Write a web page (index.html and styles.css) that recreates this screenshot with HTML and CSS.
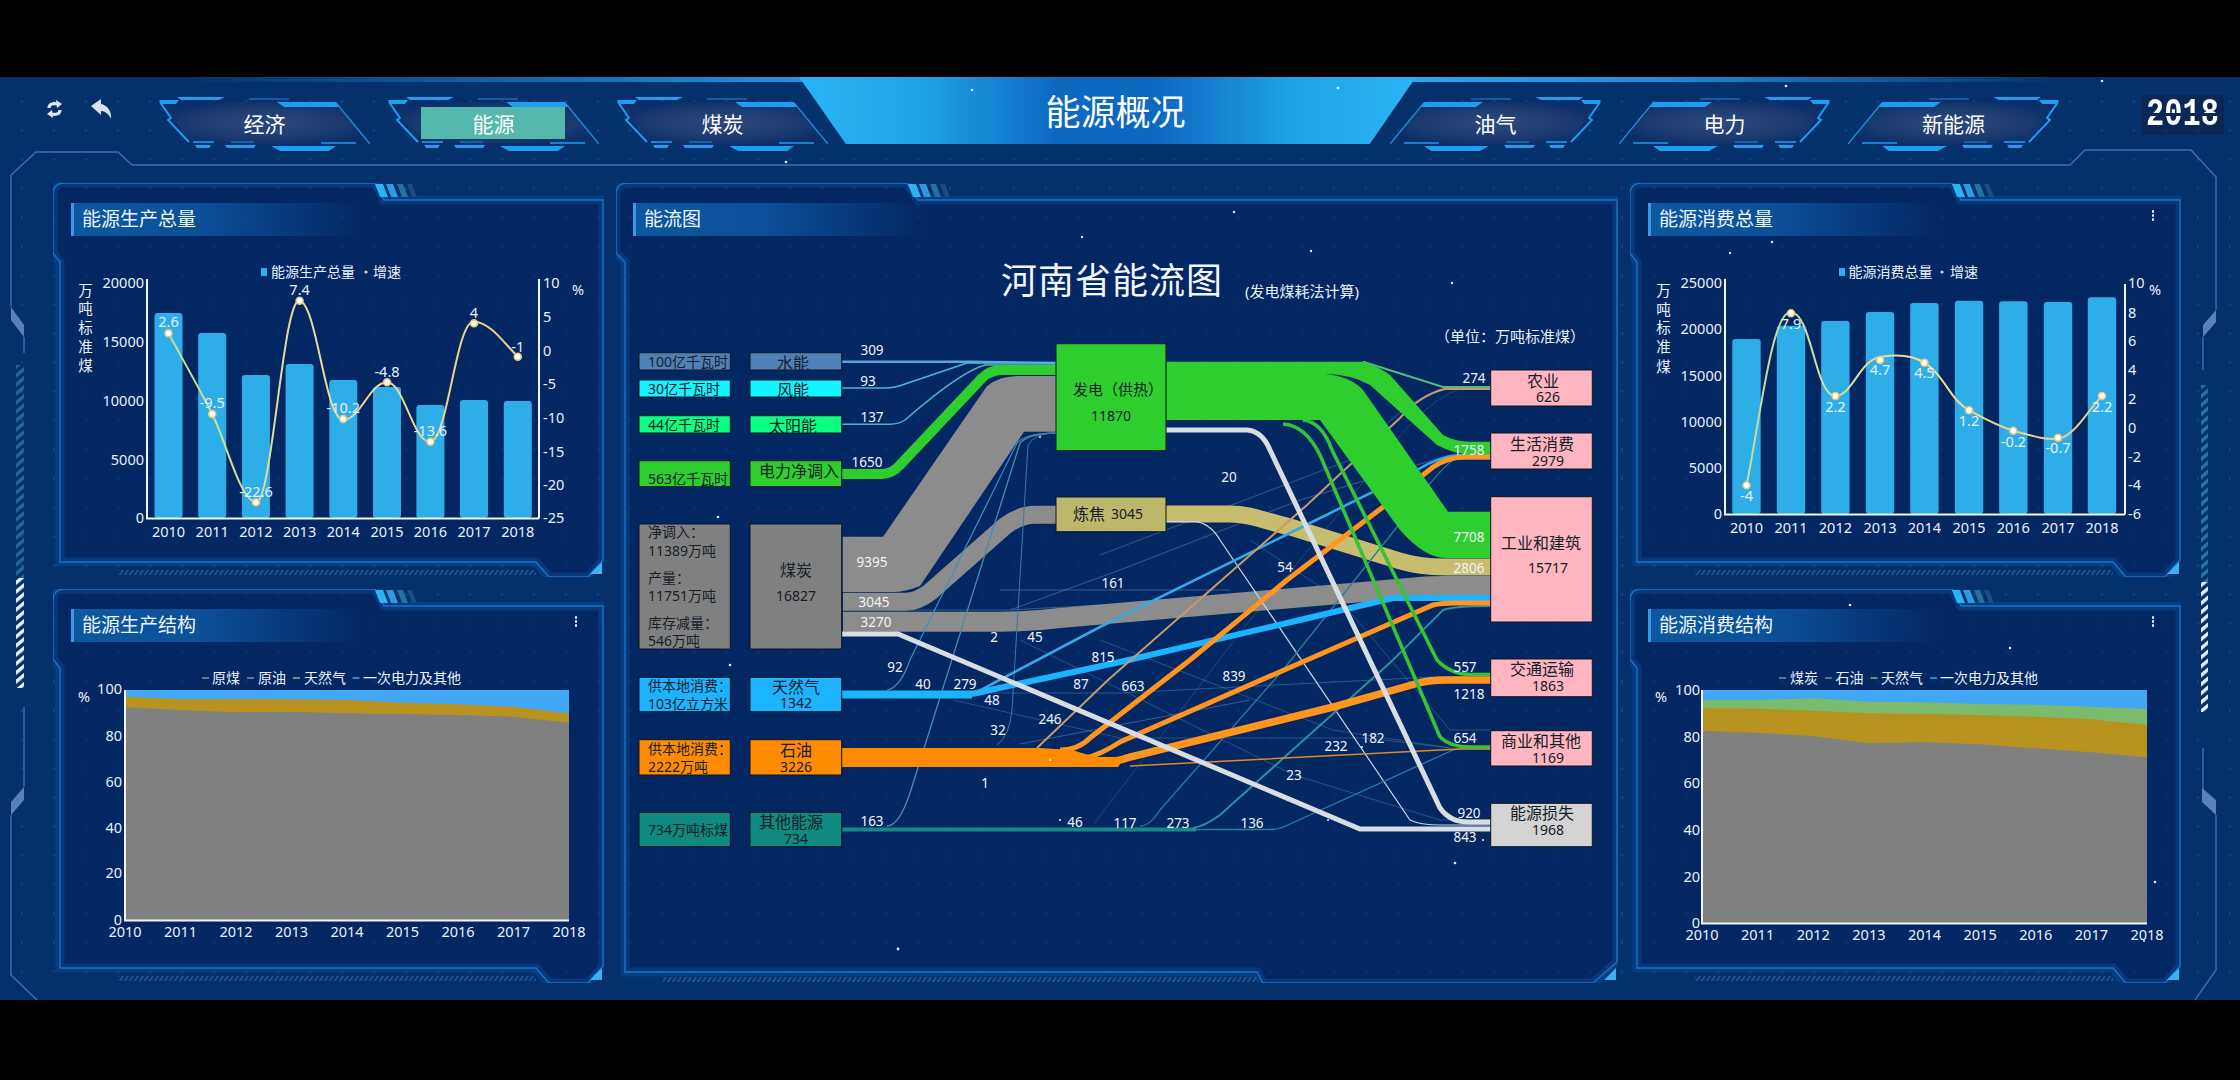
FILE: index.html
```html
<!DOCTYPE html>
<html lang="zh-CN">
<head>
<meta charset="utf-8">
<title>能源概况</title>
<link rel="stylesheet" href="styles.css">
</head>
<body>
<svg class="defs" aria-hidden="true">
  <defs>
    <radialGradient id="tabfill" cx="50%" cy="50%" r="55%">
      <stop offset="0" stop-color="#2d4a7b"/><stop offset="0.7" stop-color="#1a3a70"/><stop offset="1" stop-color="#0b2f69"/>
    </radialGradient>
    <linearGradient id="linegrad" x1="0" y1="0" x2="1" y2="0">
      <stop offset="0" stop-color="#bfdca0"/><stop offset="0.5" stop-color="#f0dc94"/><stop offset="1" stop-color="#e8c98a"/>
    </linearGradient>
    <pattern id="hatch" width="5" height="6" patternUnits="userSpaceOnUse" patternTransform="skewX(-35)">
      <rect width="2.2" height="6" fill="#3f86c9"/>
    </pattern>
    <pattern id="vteal" width="8" height="9" patternUnits="userSpaceOnUse" patternTransform="skewY(-40)">
      <rect width="8" height="4.5" fill="#2f8fb4"/>
    </pattern>
    <pattern id="vwhite" width="8" height="9" patternUnits="userSpaceOnUse" patternTransform="skewY(-40)">
      <rect width="8" height="4.5" fill="#e6eff9"/>
    </pattern>
    <symbol id="tab" viewBox="0 0 211 55">
      <polygon points="4,6 177,6 210,48 31,48" fill="url(#tabfill)"/>
      <g fill="#1f9df0">
        <polygon points="0,4 20,4 17,8 2,8"/>
        <polygon points="18,1 66,1 60,4 22,4"/>
        <polygon points="118,6 177,6 181,11 125,11"/>
        <polygon points="36,49 52,49 50,52 38,52"/>
        <polygon points="66,49 97,49 95,52 68,52"/>
        <polygon points="112,50 177,50 170,55 121,55"/>
      </g>
      <polyline points="1,6 12,22 9,24 30,46" fill="none" stroke="#1f9df0" stroke-width="2"/>
      <line x1="178" y1="8" x2="211" y2="48" stroke="#1f8fe0" stroke-width="1.2"/>
      <g stroke-width="1.6" fill="none">
        <line x1="90" y1="3" x2="130" y2="3" stroke="#1a6cb8"/>
        <line x1="34" y1="46" x2="55" y2="46" stroke="#1f9df0"/>
        <line x1="72" y1="46" x2="95" y2="46" stroke="#1a6cb8"/>
        <line x1="162" y1="47" x2="197" y2="47" stroke="#1f9df0"/>
      </g>
    </symbol>
    <symbol id="stripes" viewBox="0 0 60 14">
      <polygon points="0,0 8,0 13,13 5,13" fill="#2ab4f2"/>
      <polygon points="11,0 18,0 23,13 16,13" fill="#2a9bdc"/>
      <polygon points="22,0 28,0 33,13 27,13" fill="#23719f" />
      <polygon points="32,0 37,0 42,13 37,13" fill="#17507f"/>
    </symbol>
    <symbol id="frame-side" viewBox="0 0 551 394">
      <path d="M7,379 V79 L0,70 V12 Q0,0 12,0 H322 L331,17 H550 V377 L535,394 H496 L483,379 Z" class="frame-fill"/>
      <path d="M7,379 V79 L0,70 V12 Q0,0 12,0 H322 L331,17 H550 V377 L535,394 H496 L483,379 Z" class="frame-glow"/>
      <path d="M7,379 V79 L0,70 V12 Q0,0 12,0 H322 L331,17 H550 V377 L535,394 H496 L483,379 Z" class="frame-line"/>
      <rect x="65" y="387" width="418" height="5" fill="url(#hatch)" opacity=".45"/>
      <polygon points="549,379 549,391 537,391" fill="#3db0f0"/>
      <use href="#stripes" x="322" y="1" width="60" height="14"/>
    </symbol>
    <symbol id="frame-center" viewBox="0 0 1002 800">
      <path d="M9,789 V79 L0,70 V12 Q0,0 12,0 H291 L302,17 H1001 V779 L977,800 H647 L641,789 Z" class="frame-fill"/>
      <path d="M9,789 V79 L0,70 V12 Q0,0 12,0 H291 L302,17 H1001 V779 L977,800 H647 L641,789 Z" class="frame-glow"/>
      <path d="M9,789 V79 L0,70 V12 Q0,0 12,0 H291 L302,17 H1001 V779 L977,800 H647 L641,789 Z" class="frame-line"/>
      <rect x="47" y="794" width="594" height="5" fill="url(#hatch)" opacity=".45"/>
      <polygon points="1000,785 1000,797 988,797" fill="#3db0f0"/>
      <use href="#stripes" x="292" y="1" width="60" height="14"/>
    </symbol>
  </defs>
</svg>

<main class="stage">
  <svg class="stage-frame" viewBox="0 77 2240 923" aria-hidden="true">
    <g class="deco-line">
      <path d="M132,165 H2070 L2085,150 H2191 L2216,177 V310"/>
      <path d="M132,165 L118,152 H36 L11,175 V307"/>
      <path d="M24,337 V353"/>
      <path d="M2203,337 V370"/>
      <path d="M24,707 V787"/>
      <path d="M11,815 V975 L37,1000"/>
      <path d="M2203,748 V790"/>
      <path d="M2216,815 V970 L2195,1000"/>
    </g>
    <g fill="#5a82b8">
      <polygon points="11,307 24,325 24,337 11,320"/>
      <polygon points="2216,310 2216,322 2203,337 2203,325"/>
      <polygon points="24,787 24,800 11,815 11,802"/>
      <polygon points="2202,788 2216,800 2216,815 2202,802"/>
    </g>
    <rect x="16" y="365" width="8" height="213" fill="url(#vteal)" opacity=".6"/>
    <rect x="16" y="578" width="8" height="110" fill="url(#vwhite)"/>
    <rect x="2201" y="385" width="7" height="197" fill="url(#vteal)" opacity=".75"/>
    <rect x="2201" y="582" width="7" height="130" fill="url(#vwhite)"/>
  </svg>

  <header class="top">
    <div class="tools">
      <svg class="ic-refresh" viewBox="0 0 15 18" aria-hidden="true">
        <path d="M2,8 C2,4 6,3 11,4" fill="none" stroke="#dde7f2" stroke-width="3.2"/>
        <polygon points="9,0 15,4 10,8" fill="#dde7f2"/>
        <path d="M13,10 C13,14 9,15 4,14" fill="none" stroke="#dde7f2" stroke-width="3.2"/>
        <polygon points="6,18 0,14 5,10" fill="#dde7f2"/>
      </svg>
      <svg class="ic-back" viewBox="0 0 21 20" aria-hidden="true">
        <path d="M0,7 L10,0 V5 C16,6 21,12 20,20 C18,15 14,12 10,12 V16 Z" fill="#d5e2ee"/>
      </svg>
    </div>
    <nav class="tabs">
      <a class="tab"><svg class="tab-bg"><use href="#tab"/></svg><span>经济</span></a>
      <a class="tab active"><svg class="tab-bg"><use href="#tab"/></svg><i class="tab-on"></i><span>能源</span></a>
      <a class="tab"><svg class="tab-bg"><use href="#tab"/></svg><span>煤炭</span></a>
    </nav>
    <h1 class="main-title">能源概况</h1>
    <nav class="tabs tabs-right">
      <a class="tab"><svg class="tab-bg"><use href="#tab"/></svg><span>油气</span></a>
      <a class="tab"><svg class="tab-bg"><use href="#tab"/></svg><span>电力</span></a>
      <a class="tab"><svg class="tab-bg"><use href="#tab"/></svg><span>新能源</span></a>
    </nav>
    <div class="year"><span class="year-num">2018</span></div>
  </header>

  <div class="board">
    <section class="panel panel-a">
      <svg class="frame" viewBox="0 0 551 394"><use href="#frame-side"/></svg>
      <h2 class="bar">能源生产总量</h2>
      <svg class="chart" viewBox="53 236 551 341">
        <g class="legend">
          <rect x="261" y="268" width="6" height="8" fill="#2eaee8"/>
          <text x="271" y="277">能源生产总量</text>
          <circle cx="366" cy="272" r="1.6" fill="#cfe3a8"/>
          <text x="373" y="277">增速</text>
        </g>
        <g class="bars">
          <rect x="154.5" y="313" width="28" height="205" rx="3"/>
          <rect x="198.2" y="333" width="28" height="185" rx="3"/>
          <rect x="241.9" y="375" width="28" height="143" rx="3"/>
          <rect x="285.6" y="364" width="28" height="154" rx="3"/>
          <rect x="329.3" y="380" width="28" height="138" rx="3"/>
          <rect x="373" y="387" width="28" height="131" rx="3"/>
          <rect x="416.4" y="405" width="28" height="113" rx="3"/>
          <rect x="460" y="400" width="28" height="118" rx="3"/>
          <rect x="503.8" y="401" width="28" height="117" rx="3"/>
        </g>
        <path class="axis-line" d="M147,279 V518.5 H539 M539,518.5 V279"/>
        <g class="tx end">
          <text x="144" y="288">20000</text><text x="144" y="347">15000</text><text x="144" y="406">10000</text><text x="144" y="465">5000</text><text x="144" y="523">0</text>
        </g>
        <g class="tx">
          <text x="543" y="288">10</text><text x="543" y="322">5</text><text x="543" y="356">0</text><text x="543" y="389">-5</text><text x="543" y="423">-10</text><text x="543" y="457">-15</text><text x="543" y="490">-20</text><text x="543" y="523">-25</text>
          <text x="572" y="295">%</text>
        </g>
        <g class="tx mid">
          <text x="85.5" y="296">万</text><text x="85.5" y="314">吨</text><text x="85.5" y="333">标</text><text x="85.5" y="352">准</text><text x="85.5" y="371">煤</text>
          <text x="168.5" y="537">2010</text><text x="212.2" y="537">2011</text><text x="255.9" y="537">2012</text><text x="299.6" y="537">2013</text><text x="343.3" y="537">2014</text><text x="387" y="537">2015</text><text x="430.4" y="537">2016</text><text x="474" y="537">2017</text><text x="517.8" y="537">2018</text>
        </g>
        <path class="curve" d="M168.5,333.3 C183,360 198,386 212.2,414 C227,444 240,500 255.9,502.3 C272,505 283,297 299.6,300.7 C317,304 325,420 343.3,420 C360,420 370,382 387,382.3 C404,382 413,443 430.4,441.7 C448,440 456,320 474,321.5 C491,323 503,342 517.8,356.7"/>
        <g class="dots">
          <circle cx="168.5" cy="333.3" r="3.5"/><circle cx="212.2" cy="414" r="3.5"/><circle cx="255.9" cy="502.3" r="3.5"/><circle cx="299.6" cy="300.7" r="3.5"/><circle cx="343.3" cy="419" r="3.5"/><circle cx="387" cy="382.3" r="3.5"/><circle cx="430.4" cy="441.7" r="3.5"/><circle cx="474" cy="323.3" r="3.5"/><circle cx="517.8" cy="356.7" r="3.5"/>
        </g>
        <g class="tx mid">
          <text x="168.5" y="327">2.6</text><text x="212.2" y="408">-9.5</text><text x="256" y="497">-22.6</text><text x="299.6" y="295">7.4</text><text x="343.3" y="413">-10.2</text><text x="387" y="377">-4.8</text><text x="430.4" y="436">-13.6</text><text x="474" y="318">4</text><text x="517.8" y="352">-1</text>
        </g>
      </svg>
    </section>

    <section class="panel panel-center">
      <svg class="frame" viewBox="0 0 1002 800"><use href="#frame-center"/></svg>
      <h2 class="bar bar-center">能流图</h2>
      <svg class="chart" viewBox="616 236 1002 747">
        <text class="sk-title" x="1001" y="294">河南省能流图</text>
        <text class="sk-sub" x="1245" y="297">(发电煤耗法计算)</text>
        <text class="sk-sub" x="1435" y="342">（单位：万吨标准煤）</text>

        <!-- faint lines -->
        <g class="flow faint">
          <path d="M1010,610 L1120,570 L1300,500 L1450,455 H1491" stroke="#6d8fb4"/>
          <path d="M1100,555 L1350,460 Q1400,405 1440,389 H1491" stroke="#5f86ad"/>
          <path d="M1093,825 L1250,620 L1350,500 Q1420,400 1460,389 H1491" stroke="#2d6f95"/>
          <path d="M953,700 L1120,738 L1367,738 L1450,748 H1491" stroke="#4a7ea8"/>
          <path d="M1100,640 L1333,730 L1450,748" stroke="#4a7ea8"/>
          <path d="M1020,640 L1294,775 L1440,820 H1491" stroke="#4a7ea8"/>
          <path d="M1250,540 L1340,600 L1450,730 H1491" stroke="#4a7ea8"/>
          <path d="M973,693 H1120 L1433,677 H1491" stroke="#3f8fc4"/>
          <path d="M1100,605 L1010,610 H890" stroke="#6d8fb4"/>
          <path d="M1000,590 L1230,590" stroke="#6d8fb4"/>
          <path d="M1020,744 L1250,700" stroke="#6d8fb4"/>
        </g>
        <g class="flow">
          <path d="M842,361.7 H970 L1056,363" stroke="#5da5d4" stroke-width="2.4"/>
          <path d="M842,388 H885 Q895,388 905,384 L967,363 H1056" stroke="#52b5d4" stroke-width="1.4"/>
          <path d="M842,424.3 H890 Q899,424 905,420 Q960,372 985,365 H1056" stroke="#4ab5c4" stroke-width="1.5"/>
          <path d="M842,474 H882 Q892,474 900,465 L982,378 Q990,370 1002,370 H1056" stroke="#2dce2d" stroke-width="10"/>
        </g>
        <!-- coal -->
        <path class="fill-gray" d="M842.7,536.7 H883 L987,386 Q1000,376 1017,376 H1056 V431.7 H1024 L920,586 Q905,592 893,592 H842.7 Z"/>
        <g class="flow">
          <path d="M843,601.7 H905 Q918,601.7 930,592 L1005,526 Q1020,514.7 1035,514.7 H1056" stroke="#8c8c8c" stroke-width="18"/>
          <path d="M843,621.7 H1000 Q1030,621.7 1060,618 L1420,587 Q1430,586 1445,586 H1491" stroke="#8c8c8c" stroke-width="20"/>
          <!-- thin to power -->
          <path d="M887,690 Q900,688 910,660 L1017,443 Q1026,433 1056,433" stroke="#3d8fc0" stroke-width="1.2"/>
          <path d="M887,826 Q899,826 910,793 L1020,443 Q1030,433 1056,433" stroke="#4a8ca8" stroke-width="1.3"/>
          <path d="M997,745 Q1010,735 1012,710 L1028,445 Q1035,433 1056,433" stroke="#3b78a4" stroke-width="1"/>
          <!-- coke -->
          <path d="M1166,514 H1230 C1250,514 1265,521 1290,527 L1400,561 Q1420,567 1445,567 H1491" stroke="#c8bd6e" stroke-width="17"/>
          <path d="M1166,521.7 H1195 Q1210,523 1220,540 L1410,820 Q1420,825 1440,825 H1491" stroke="#c6d6e6" stroke-width="1.2"/>
          <!-- other -->
          <path d="M842,829.5 H1196" stroke="#138a85" stroke-width="4"/>
          <path d="M1190,829.5 H1273 Q1280,829 1290,824 L1453,750 Q1460,748 1491,749" stroke="#2b7e98" stroke-width="1.3"/>
          <path d="M1140,826 Q1150,826 1160,810 L1283,670 L1397,527 Q1440,467 1455,459 H1491" stroke="#2a7c9c" stroke-width="1.3"/>
          <path d="M1193,828 Q1205,826 1220,815 L1393,660 L1443,610 Q1455,606 1491,606" stroke="#2f8f9c" stroke-width="2"/>
          <!-- gas -->
          <path d="M842,694.5 H965 Q975,694 990,690 L1120,662 L1300,620 L1393,598 H1491" stroke="#1db4ff" stroke-width="6"/>
          <path d="M960,695 Q975,694 990,685 L1100,627 L1300,528 L1417,470 Q1440,456 1460,455 H1491" stroke="#34a8e8" stroke-width="2.6"/>
          <path d="M842,694.5 H972" stroke="#1db4ff" stroke-width="8"/>
          <!-- oil -->
          <path d="M1037,748 L1108,680 L1207,593 L1307,505 L1400,418 Q1420,395 1445,389 H1491" stroke="#c49a6c" stroke-width="2"/>
          <path d="M1130,766 L1460,749 H1491" stroke="#e08a20" stroke-width="1.5"/>
          <path d="M1060,750 Q1078,750 1090,738 L1190,660 L1287,580 L1383,507 L1433,467 Q1448,457 1465,457 H1491" stroke="#ff951f" stroke-width="5"/>
          <path d="M1085,758 Q1100,755 1120,742 L1307,660 L1433,605 Q1442,603 1455,603 H1491" stroke="#ff951f" stroke-width="5"/>
          <path d="M1100,763 Q1112,763 1130,757 L1333,707 L1415,684 Q1428,680 1445,680 H1491" stroke="#ff951f" stroke-width="7.5"/>
        </g>
        <path class="fill-orange" d="M842,748 H1040 L1072,750 L1095,757 L1125,757 L1118,767 H842 Z"/>
        <g class="flow">
          <!-- loss -->
          <path d="M842,634 H898 L1360,829 H1491" stroke="#d8dde4" stroke-width="5"/>
          <path d="M1166,430 H1247 Q1262,431 1270,450 L1440,808 Q1450,822 1468,822 H1491" stroke="#d8dde4" stroke-width="5"/>
          <!-- green thin -->
          <path d="M1283,424 Q1305,425 1320,455 L1440,737 Q1450,747 1470,747 H1491" stroke="#35c435" stroke-width="3.6"/>
          <path d="M1303,420 Q1322,422 1332,450 L1437,660 Q1450,674 1470,674.5 H1491" stroke="#35c435" stroke-width="3.6"/>
          <path d="M1363,361.7 L1443,387 H1491" stroke="#5ab87a" stroke-width="2"/>
        </g>
        <!-- green wide -->
        <path class="fill-green" d="M1166,361.7 H1363 Q1378,366 1390,375 L1443,435 Q1455,441.7 1470,441.7 H1491 V454.3 H1465 Q1450,452 1437,445 L1370,385 Q1350,374 1325,374 H1166 Z"/>
        <path class="fill-green" d="M1166,374 H1325 Q1350,376 1363,390 L1448,511.7 H1491 V558 H1445 Q1425,558 1400,530 L1320,420 H1166 Z"/>

        <!-- source boxes -->
        <g class="node">
          <rect x="639" y="352.7" width="91.3" height="17.3" fill="#4d81b8"/>
          <rect x="750" y="352.7" width="91.7" height="17.3" fill="#4d81b8"/>
          <rect x="639" y="380" width="91.3" height="17" fill="#13f4ff"/>
          <rect x="750" y="380" width="91.7" height="17" fill="#13f4ff"/>
          <rect x="639" y="415.7" width="91.3" height="17.3" fill="#0cff80"/>
          <rect x="750" y="415.7" width="91.7" height="17.3" fill="#0cff80"/>
          <rect x="639" y="460.7" width="91.3" height="26" fill="#2dce2d"/>
          <rect x="750" y="460.7" width="91.7" height="26" fill="#2dce2d"/>
          <rect x="639" y="524" width="91.3" height="125" fill="#808080"/>
          <rect x="750" y="524" width="91.7" height="125" fill="#808080"/>
          <rect x="639" y="677.3" width="91.3" height="34.4" fill="#1cb4ff"/>
          <rect x="750" y="677.3" width="91.7" height="34.4" fill="#1cb4ff"/>
          <rect x="639" y="739.7" width="91.3" height="35.3" fill="#ff8c00"/>
          <rect x="750" y="739.7" width="91.7" height="35.3" fill="#ff8c00"/>
          <rect x="639" y="812.3" width="91.3" height="34.4" fill="#0f8a80"/>
          <rect x="750" y="812.3" width="91.7" height="34.4" fill="#0f8a80"/>
          <rect x="1056" y="343.7" width="110" height="107" fill="#2dce2d"/>
          <rect x="1056" y="497" width="110" height="34.7" fill="#bdb76b"/>
          <rect x="1490.7" y="370" width="101.6" height="36" fill="#ffb6c1"/>
          <rect x="1490.7" y="433" width="101.6" height="36" fill="#ffb6c1"/>
          <rect x="1490.7" y="496.7" width="101.6" height="125.3" fill="#ffb6c1"/>
          <rect x="1490.7" y="659" width="101.6" height="37.7" fill="#ffb6c1"/>
          <rect x="1490.7" y="730.7" width="101.6" height="35.3" fill="#ffb6c1"/>
          <rect x="1490.7" y="803.3" width="101.6" height="43.4" fill="#d3d3d3"/>
        </g>
        <g class="nt">
          <text x="648" y="367">100亿千瓦时</text>
          <text x="648" y="394">30亿千瓦时</text>
          <text x="648" y="430">44亿千瓦时</text>
          <text x="648" y="484">563亿千瓦时</text>
          <text x="648" y="537">净调入：</text>
          <text x="648" y="556">11389万吨</text>
          <text x="648" y="583">产量：</text>
          <text x="648" y="601">11751万吨</text>
          <text x="648" y="628">库存减量：</text>
          <text x="648" y="646">546万吨</text>
          <text x="648" y="691">供本地消费：</text>
          <text x="648" y="709">103亿立方米</text>
          <text x="648" y="754">供本地消费：</text>
          <text x="648" y="772">2222万吨</text>
          <text x="648" y="835">734万吨标煤</text>
        </g>
        <g class="nt mid">
          <text x="796" y="601">16827</text>
          <text x="796" y="708">1342</text>
          <text x="796" y="772">3226</text>
          <text x="796" y="844">734</text>
          <text x="1111" y="421">11870</text>
          <text x="1548" y="402">626</text>
          <text x="1548" y="466">2979</text>
          <text x="1548" y="573">15717</text>
          <text x="1548" y="691">1863</text>
          <text x="1548" y="763">1169</text>
          <text x="1548" y="835">1968</text>
        </g>
        <g class="nb mid">
          <text x="793" y="369">水能</text>
          <text x="793" y="396">风能</text>
          <text x="793" y="432">太阳能</text>
          <text x="799" y="477">电力净调入</text>
          <text x="796" y="576">煤炭</text>
          <text x="796" y="693">天然气</text>
          <text x="796" y="756">石油</text>
          <text x="791" y="828">其他能源</text>
          <text class="nb-power" x="1118" y="395">发电（供热）</text>
          <text x="1543" y="387">农业</text>
          <text x="1542" y="450">生活消费</text>
          <text x="1541" y="549">工业和建筑</text>
          <text x="1542" y="675">交通运输</text>
          <text x="1541" y="747">商业和其他</text>
          <text x="1542" y="819">能源损失</text>
        </g>
        <text class="nb" x="1073" y="520">炼焦</text>
        <text class="nt" x="1111" y="519">3045</text>

        <g class="sv">
          <text x="872" y="355">309</text><text x="868" y="386">93</text><text x="872" y="422">137</text><text x="867" y="467">1650</text><text x="872" y="567">9395</text><text x="874" y="607">3045</text><text x="876" y="627">3270</text>
          <text x="994" y="642">2</text><text x="1035" y="642">45</text><text x="895" y="672">92</text><text x="923" y="689">40</text><text x="965" y="689">279</text><text x="992" y="705">48</text><text x="998" y="735">32</text><text x="1050" y="724">246</text><text x="1081" y="689">87</text><text x="1103" y="662">815</text><text x="985" y="788">1</text><text x="872" y="826">163</text><text x="1075" y="827">46</text>
          <text x="1113" y="588">161</text><text x="1229" y="482">20</text><text x="1285" y="572">54</text><text x="1474" y="383">274</text><text x="1469" y="455">1758</text><text x="1469" y="542">7708</text><text x="1469" y="573">2806</text><text x="1465" y="672">557</text>
          <text x="1133" y="691">663</text><text x="1234" y="681">839</text><text x="1469" y="699">1218</text><text x="1465" y="743">654</text><text x="1373" y="743">182</text><text x="1336" y="751">232</text><text x="1294" y="780">23</text><text x="1125" y="828">117</text><text x="1178" y="828">273</text><text x="1252" y="828">136</text><text x="1469" y="818">920</text><text x="1465" y="842">843</text>
        </g>
      </svg>
    </section>

    <section class="panel panel-c">
      <svg class="frame" viewBox="0 0 551 394"><use href="#frame-side"/></svg>
      <h2 class="bar">能源消费总量</h2>
      <i class="more"></i>
      <svg class="chart" viewBox="1630 236 551 341">
        <g class="legend">
          <rect x="1839" y="268" width="6" height="8" fill="#2eaee8"/>
          <text x="1848.5" y="277">能源消费总量</text>
          <circle cx="1942" cy="272" r="1.6" fill="#cfe3a8"/>
          <text x="1950" y="277">增速</text>
        </g>
        <g class="bars">
          <rect x="1732.3" y="339" width="28.4" height="175" rx="3"/>
          <rect x="1776.8" y="325.7" width="28.4" height="188.3" rx="3"/>
          <rect x="1821.2" y="321" width="28.4" height="193" rx="3"/>
          <rect x="1865.8" y="312" width="28.4" height="202" rx="3"/>
          <rect x="1910.2" y="303" width="28.4" height="211" rx="3"/>
          <rect x="1954.8" y="300.7" width="28.4" height="213.3" rx="3"/>
          <rect x="1999.1" y="301.3" width="28.4" height="212.7" rx="3"/>
          <rect x="2043.8" y="302" width="28.4" height="212" rx="3"/>
          <rect x="2087.8" y="297.3" width="28.4" height="216.7" rx="3"/>
        </g>
        <path class="axis-line" d="M1725,279 V514.5 H2125 M2125,514.5 V284"/>
        <g class="tx end">
          <text x="1722" y="288">25000</text><text x="1722" y="334">20000</text><text x="1722" y="381">15000</text><text x="1722" y="427">10000</text><text x="1722" y="473">5000</text><text x="1722" y="519">0</text>
        </g>
        <g class="tx">
          <text x="2128" y="288">10</text><text x="2128" y="318">8</text><text x="2128" y="346">6</text><text x="2128" y="375">4</text><text x="2128" y="404">2</text><text x="2128" y="433">0</text><text x="2128" y="462">-2</text><text x="2128" y="490">-4</text><text x="2128" y="519">-6</text>
          <text x="2149" y="295">%</text>
        </g>
        <g class="tx mid">
          <text x="1663.5" y="296">万</text><text x="1663.5" y="315">吨</text><text x="1663.5" y="333">标</text><text x="1663.5" y="352">准</text><text x="1663.5" y="372">煤</text>
          <text x="1746.5" y="533">2010</text><text x="1791" y="533">2011</text><text x="1835.4" y="533">2012</text><text x="1880" y="533">2013</text><text x="1924.4" y="533">2014</text><text x="1969" y="533">2015</text><text x="2013.3" y="533">2016</text><text x="2058" y="533">2017</text><text x="2102" y="533">2018</text>
        </g>
        <path class="curve" d="M1746.5,485.3 C1760,420 1772,310 1791,312 C1812,314 1815,396 1835.4,396 C1852,396 1860,360 1880,357 C1895,354.5 1912,355 1924.4,362.7 C1945,376 1950,400 1969,410.3 C1985,419 1997,426 2013.3,430.7 C2030,435 2042,440 2058,438.7 C2075,436 2088,410 2102,396"/>
        <g class="dots">
          <circle cx="1746.5" cy="485.3" r="3.5"/><circle cx="1791" cy="313.3" r="3.5"/><circle cx="1835.4" cy="396" r="3.5"/><circle cx="1880" cy="360" r="3.5"/><circle cx="1924.4" cy="362.7" r="3.5"/><circle cx="1969" cy="410.3" r="3.5"/><circle cx="2013.3" cy="430.7" r="3.5"/><circle cx="2058" cy="437.7" r="3.5"/><circle cx="2102" cy="396" r="3.5"/>
        </g>
        <g class="tx mid">
          <text x="1746.5" y="501">-4</text><text x="1791" y="329">7.9</text><text x="1835.4" y="412">2.2</text><text x="1880" y="375">4.7</text><text x="1924.4" y="378">4.5</text><text x="1969" y="426">1.2</text><text x="2013.3" y="447">-0.2</text><text x="2058" y="453">-0.7</text><text x="2102" y="412">2.2</text>
        </g>
      </svg>
    </section>

    <section class="panel panel-b">
      <svg class="frame" viewBox="0 0 551 394"><use href="#frame-side"/></svg>
      <h2 class="bar">能源生产结构</h2>
      <i class="more"></i>
      <svg class="chart" viewBox="53 642 551 341">
        <g class="legend">
          <path class="ldash" d="M202,678 H209" stroke="#8d8d8d"/><text x="212" y="683">原煤</text>
          <path class="ldash" d="M247,678 H254" stroke="#8d8d8d"/><text x="258" y="683">原油</text>
          <path class="ldash" d="M293,678 H300" stroke="#7cbb6c"/><text x="304" y="683">天然气</text>
          <path class="ldash" d="M352.5,678 H359.5" stroke="#42a8f5"/><text x="363" y="683">一次电力及其他</text>
        </g>
        <rect x="125" y="690" width="444" height="230" fill="#42a8f5"/>
        <polygon fill="#b8921f" points="125,696.7 180.5,699.3 236,699 291.5,699.3 347,700 402.5,702.7 458,704.3 513.5,706.7 569,713.3 569,920 125,920"/>
        <polygon fill="#808080" points="125,707.3 180.5,710 236,712.3 291.5,711.7 347,713.3 402.5,714 458,715 513.5,716.7 569,722.7 569,920 125,920"/>
        <path class="axis-line" d="M125,690 V920.5 H569"/>
        <g class="tx end">
          <text x="122" y="694">100</text><text x="122" y="741">80</text><text x="122" y="787">60</text><text x="122" y="833">40</text><text x="122" y="878">20</text><text x="122" y="925">0</text>
        </g>
        <text class="tx" x="78" y="702">%</text>
        <g class="tx mid">
          <text x="125" y="937">2010</text><text x="180.5" y="937">2011</text><text x="236" y="937">2012</text><text x="291.5" y="937">2013</text><text x="347" y="937">2014</text><text x="402.5" y="937">2015</text><text x="458" y="937">2016</text><text x="513.5" y="937">2017</text><text x="569" y="937">2018</text>
        </g>
      </svg>
    </section>

    <section class="panel panel-d">
      <svg class="frame" viewBox="0 0 551 394"><use href="#frame-side"/></svg>
      <h2 class="bar">能源消费结构</h2>
      <i class="more"></i>
      <svg class="chart" viewBox="1630 642 551 341">
        <g class="legend">
          <path class="ldash" d="M1779,678 H1786" stroke="#8d8d8d"/><text x="1790" y="683">煤炭</text>
          <path class="ldash" d="M1825,678 H1832" stroke="#8d8d8d"/><text x="1835.4" y="683">石油</text>
          <path class="ldash" d="M1870.6,678 H1877.6" stroke="#7cbb6c"/><text x="1881" y="683">天然气</text>
          <path class="ldash" d="M1930,678 H1937" stroke="#42a8f5"/><text x="1940" y="683">一次电力及其他</text>
        </g>
        <rect x="1702" y="690" width="445" height="233" fill="#42a8f5"/>
        <polygon fill="#7cbb6c" points="1702,700 1757.6,700 1813.3,698.3 1868.9,701.7 1924.5,702.3 1980.1,704 2035.8,704.7 2091.4,706.7 2147,709 2147,923 1702,923"/>
        <polygon fill="#b8921f" points="1702,708.3 1757.6,708.7 1813.3,710.7 1868.9,713.3 1924.5,714 1980.1,715 2035.8,716.7 2091.4,719.3 2147,725 2147,923 1702,923"/>
        <polygon fill="#808080" points="1702,730.7 1757.6,732.7 1813.3,736 1868.9,743.3 1924.5,742.3 1980.1,744.3 2035.8,748.3 2091.4,752.3 2147,757.3 2147,923 1702,923"/>
        <path class="axis-line" d="M1702,690 V923.5 H2147"/>
        <g class="tx end">
          <text x="1700" y="695">100</text><text x="1700" y="742">80</text><text x="1700" y="788">60</text><text x="1700" y="835">40</text><text x="1700" y="882">20</text><text x="1700" y="928">0</text>
        </g>
        <text class="tx" x="1655" y="702">%</text>
        <g class="tx mid">
          <text x="1702" y="940">2010</text><text x="1757.6" y="940">2011</text><text x="1813.3" y="940">2012</text><text x="1868.9" y="940">2013</text><text x="1924.5" y="940">2014</text><text x="1980.1" y="940">2015</text><text x="2035.8" y="940">2016</text><text x="2091.4" y="940">2017</text><text x="2147" y="940">2018</text>
        </g>
      </svg>
    </section>
  </div>

  <svg class="stars" viewBox="0 77 2240 923" aria-hidden="true">
    <g fill="#dff0ff">
      <circle cx="786" cy="162" r="1.3"/><circle cx="1338" cy="88" r="1.3"/><circle cx="972" cy="90" r="1.3"/><circle cx="1786" cy="86" r="1.3"/><circle cx="2102" cy="81" r="1.3"/>
      <circle cx="730" cy="665" r="1.3"/><circle cx="898" cy="949" r="1.4"/><circle cx="718" cy="517" r="1.3"/><circle cx="1455" cy="863" r="1.3"/><circle cx="1483" cy="840" r="1"/><circle cx="1362" cy="747" r="1"/><circle cx="1328" cy="820" r="1"/>
      <circle cx="1772" cy="242" r="1.2"/><circle cx="1730" cy="253" r="1.2"/><circle cx="1850" cy="605" r="1.3"/><circle cx="2010" cy="648" r="1.3"/><circle cx="2155" cy="882" r="1.3"/><circle cx="2144" cy="941" r="1"/>
      <circle cx="1234" cy="212" r="1.2"/><circle cx="1311" cy="251" r="1.2"/><circle cx="1452" cy="283" r="1.2"/><circle cx="1082" cy="237" r="1.2"/>
      <circle cx="1040" cy="437" r="1"/><circle cx="1060" cy="820" r="1"/><circle cx="1050" cy="760" r="1"/>
    </g>
  </svg>
</main>
</body>
</html>
```

FILE: styles.css
```css
* { box-sizing: border-box; }

html, body { margin: 0; padding: 0; }

body {
  width: 2240px;
  height: 1080px;
  padding-top: 77px;
  overflow: hidden;
  background: #000;
  color: #fff;
  font-family: "Noto Sans", "Noto Sans CJK SC", sans-serif;
}

.defs { display: block; width: 0; height: 0; }

.stage {
  position: relative;
  width: 2240px;
  height: 923px;
  background-color: #04306c;
  background-image: radial-gradient(circle, rgba(110, 160, 220, .18) 1px, transparent 1.6px);
  background-size: 32px 29px;
  background-position: 6px 10px;
}

.stage-frame, .stars {
  position: absolute;
  left: 0;
  top: 0;
  width: 2240px;
  height: 923px;
  pointer-events: none;
}

.deco-line path { fill: none; stroke: #3a70b4; stroke-width: 1.4; }

/* header */
.top {
  position: relative;
  display: flex;
  align-items: flex-start;
  height: 106px;
  padding-left: 45px;
  background: linear-gradient(90deg, transparent 8%, #1a8fdc 34%, #29b0f2 45%, #29b0f2 60%, #1a8fdc 74%, transparent 92%) no-repeat 0 0 / 100% 5px;
}

.tools {
  display: flex;
  gap: 29px;
  align-items: center;
  width: 114px;
  height: 20px;
  margin-top: 22px;
  padding-left: 2px;
}

.ic-refresh { width: 15px; height: 18px; }
.ic-back { width: 21px; height: 20px; }

.tabs { display: flex; gap: 18px; margin-top: 19px; }

.tab {
  position: relative;
  display: flex;
  justify-content: center;
  align-items: center;
  width: 211px;
  height: 55px;
  padding-bottom: 2px;
  font-size: 21px;
  color: #fff;
}

.tab span { position: relative; }

.tab-bg {
  position: absolute;
  left: 0;
  top: 0;
  width: 211px;
  height: 55px;
}

.tabs-right .tab-bg { transform: scaleX(-1); }

.tab-on {
  position: absolute;
  left: 33px;
  top: 11px;
  width: 144px;
  height: 32px;
  background: #55b8ac;
}

.main-title {
  display: flex;
  justify-content: center;
  align-items: center;
  width: 617px;
  height: 67px;
  margin: 0 0 0 -29px;
  padding: 0 0 3px 16px;
  font-size: 35px;
  font-weight: 400;
  color: #fff;
  background: linear-gradient(90deg, #2ab4f4 0%, #1ea3ea 20%, #0d68bf 42%, #0d68bf 58%, #1ea3ea 80%, #2ab4f4 100%);
  clip-path: polygon(0 0, 100% 0, 92.5% 100%, 7.6% 100%);
}

.tabs-right { margin-left: -26px; }

.year {
  display: flex;
  justify-content: center;
  align-items: center;
  width: 83px;
  height: 40px;
  margin: 18px 0 0 82px;
  background: rgba(15, 35, 70, .55);
}

.year-num {
  display: inline-block;
  font-family: "Liberation Mono", monospace;
  font-size: 38px;
  font-weight: 700;
  line-height: 40px;
  color: transparent;
  background: linear-gradient(#fff 46%, transparent 46%, transparent 53%, #fff 53%);
  -webkit-background-clip: text;
  background-clip: text;
  transform: scaleX(.8);
}

/* grid */
.board {
  position: relative;
  display: grid;
  grid-template-columns: 551px 1002px 551px;
  grid-template-rows: 394px 394px;
  column-gap: 12px;
  row-gap: 12px;
  padding-left: 53px;
}

.panel { position: relative; }
.panel-a { grid-column: 1; grid-row: 1; }
.panel-b { grid-column: 1; grid-row: 2; }
.panel-center { grid-column: 2; grid-row: 1 / span 2; }
.panel-c { grid-column: 3; grid-row: 1; }
.panel-d { grid-column: 3; grid-row: 2; }

.frame {
  position: absolute;
  left: 0;
  top: 0;
  width: 100%;
  height: 100%;
  overflow: visible;
}

.frame-fill { fill: rgba(1, 33, 92, .55); }
.frame-glow { fill: none; stroke: #0f5cae; stroke-width: 9; opacity: .32; }
.frame-line { fill: none; stroke: #1c72c6; stroke-width: 1.4; }

.bar {
  position: relative;
  width: 290px;
  height: 33px;
  margin: 20px 0 0 18px;
  padding-left: 8px;
  border-left: 3px solid #3a9be5;
  font-size: 19px;
  font-weight: 400;
  line-height: 32px;
  color: #eef6ff;
  background: linear-gradient(90deg, #0d589f 0%, #0c4f98 45%, rgba(12, 70, 140, 0) 100%);
}

.bar-center { margin-left: 17px; }

.more {
  position: absolute;
  right: 27px;
  top: 27px;
  width: 2.5px;
  height: 2.5px;
  border-radius: 50%;
  background: #eaf2fb;
  box-shadow: 0 4px 0 #eaf2fb, 0 8px 0 #eaf2fb;
}

.chart {
  position: relative;
  display: block;
  width: 100%;
  height: calc(100% - 53px);
}

.panel-center .chart { height: 747px; }

/* chart text */
.tx text, text.tx { font-size: 14.5px; fill: #e8f2fc; }
.legend text { font-size: 14px; fill: #e8f2fc; }
.ldash { stroke-width: 1.5; fill: none; }
.end text { text-anchor: end; }
.mid text { text-anchor: middle; }

.bars rect { fill: #2eaee8; }
.axis-line { fill: none; stroke: #eef5fc; stroke-width: 2; }
.curve { fill: none; stroke: url(#linegrad); stroke-width: 2; }
.dots circle { fill: #fff; stroke: #edc57a; stroke-width: 1.6; }

/* sankey */
.sk-title { font-size: 36px; letter-spacing: 1px; fill: #f2f7fd; }
.sk-sub { font-size: 15px; fill: #e6eff9; }

.flow path { fill: none; }
.faint path { stroke-width: 1; opacity: .5; }
.fill-gray { fill: #8c8c8c; }
.fill-green { fill: #2dce2d; }
.fill-orange { fill: #ff8c00; }

.node rect { stroke: #0c1522; stroke-width: 1; }

.nt text, text.nt { font-size: 14px; fill: #16202a; }
.nb text, text.nb { font-size: 16px; fill: #16202a; }
.nb text.nb-power { font-size: 15px; }
.sv text { font-size: 13.5px; fill: #eef4fb; text-anchor: middle; }
```
